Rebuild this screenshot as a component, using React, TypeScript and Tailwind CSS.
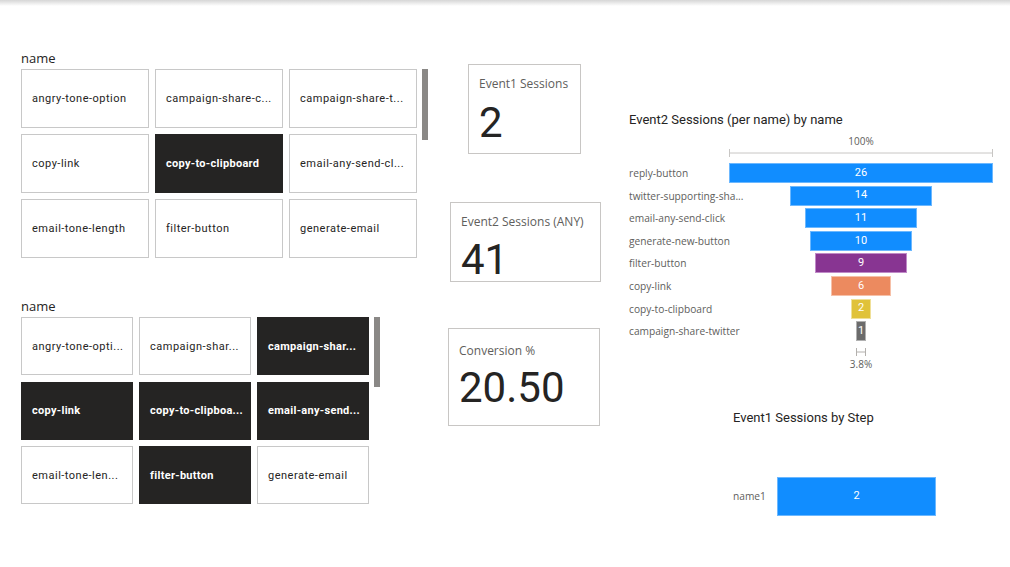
import React from "react";

// --- Data ------------------------------------------------------------------
const din = { fontFamily: "Roboto, 'Liberation Sans', sans-serif" };
const segoe = { fontFamily: "'Open Sans', 'Noto Sans', sans-serif" };

const slicerA = [
  { label: "angry-tone-option" },
  { label: "campaign-share-c..." },
  { label: "campaign-share-t..." },
  { label: "copy-link" },
  { label: "copy-to-clipboard", on: true },
  { label: "email-any-send-cl..." },
  { label: "email-tone-length" },
  { label: "filter-button" },
  { label: "generate-email" },
];

const slicerB = [
  { label: "angry-tone-opti..." },
  { label: "campaign-shar..." },
  { label: "campaign-shar...", on: true },
  { label: "copy-link", on: true },
  { label: "copy-to-clipboa...", on: true },
  { label: "email-any-send...", on: true },
  { label: "email-tone-len..." },
  { label: "filter-button", on: true },
  { label: "generate-email" },
];

const funnel = [
  { name: "reply-button", value: 26, color: "bg-[#118dff] border-[#6cb8ff]" },
  { name: "twitter-supporting-sha...", value: 14, color: "bg-[#118dff] border-[#6cb8ff]" },
  { name: "email-any-send-click", value: 11, color: "bg-[#118dff] border-[#6cb8ff]" },
  { name: "generate-new-button", value: 10, color: "bg-[#118dff] border-[#6cb8ff]" },
  { name: "filter-button", value: 9, color: "bg-[#883592] border-[#c08ac8]" },
  { name: "copy-link", value: 6, color: "bg-[#ec8a5f] border-[#f6c0a8]" },
  { name: "copy-to-clipboard", value: 2, color: "bg-[#e0c23a] border-[#f0e098]" },
  { name: "campaign-share-twitter", value: 1, color: "bg-[#6b6b6b] border-[#b0b0b0]" },
];

// --- Slicer ----------------------------------------------------------------
interface Tile {
  label: string;
  on?: boolean;
}

function Slicer({ tiles, wide }: { tiles: Tile[]; wide?: boolean }) {
  return (
    <div>
      <div className="h-[16px] text-[13px] leading-[16px] text-[#252423] mb-[3px]" style={segoe}>
        name
      </div>
      <div className="flex items-start gap-[5px]">
        <div
          className={
            wide
              ? "grid grid-cols-[128px_128px_128px] auto-rows-[59px] gap-x-[6px] gap-y-[6px]"
              : "grid grid-cols-[112px_112px_112px] auto-rows-[58px] gap-x-[6px] gap-y-[6.5px]"
          }
        >
          {tiles.map((t, i) => (
            <div
              key={i}
              className={
                t.on
                  ? "flex items-center pl-[10px] pt-[2px] bg-[#252423] border border-[#252423] text-white font-bold text-[11px] tracking-[0.3px] whitespace-nowrap overflow-hidden"
                  : "flex items-center pl-[10px] pt-[2px] bg-white border border-[#c8c8c8] text-[#252423] text-[11px] tracking-[0.5px] whitespace-nowrap overflow-hidden"
              }
              style={din}
            >
              {t.label}
            </div>
          ))}
        </div>
        <div className={wide ? "w-[6px] h-[71px] bg-[#8a8886]" : "w-[6px] h-[70px] bg-[#8a8886]"} />
      </div>
    </div>
  );
}

// --- Card ------------------------------------------------------------------
function Card({ title, value, className }: { title: string; value: string; className: string }) {
  return (
    <div className={"border border-[#c8c6c4] bg-white flex flex-col " + className}>
      <div className="text-[12px] leading-[16px] text-[#605e5c]" style={segoe}>
        {title}
      </div>
      <div className="text-[42px] leading-[42px] text-[#252423]" style={din}>
        {value}
      </div>
    </div>
  );
}

// --- Page ------------------------------------------------------------------
export default function App() {
  const max = funnel[0].value;
  return (
    <div className="w-[1010px] h-[567px] bg-white overflow-hidden">
      <div className="h-[6px] bg-linear-to-b from-[#d6d6d6] to-white" />
      <div className="flex items-start">
        {/* Slicers */}
        <div className="ml-[21px] pt-[44px] w-[407px]">
          <Slicer tiles={slicerA} wide />
          <div className="mt-[40px]">
            <Slicer tiles={slicerB} />
          </div>
        </div>

        {/* Cards */}
        <div className="ml-[20px] flex flex-col items-start">
          <Card title="Event1 Sessions" value="2" className="ml-[20px] mt-[58px] w-[113px] h-[90px] pl-[10px] pt-[11px] gap-[10px]" />
          <Card title="Event2 Sessions (ANY)" value="41" className="ml-[2px] mt-[48px] w-[151px] h-[80px] pl-[10px] pt-[11px] gap-[9px]" />
          <Card title="Conversion %" value="20.50" className="mt-[46px] w-[152px] h-[98px] pl-[10px] pt-[14px] gap-[8px]" />
        </div>

        {/* Charts */}
        <div className="ml-[28px] mt-[106px] w-[370px]">
          <div className="text-[13px] leading-[16px] text-[#252423]" style={din}>
            Event2 Sessions (per name) by name
          </div>
          <div className="ml-[100px] w-[264px]">
            <div className="mt-[7px] text-center text-[10px] leading-[12px] text-[#605e5c]" style={segoe}>
              100%
            </div>
            <svg width="264" height="10" className="mt-[1px] block">
              <line x1="0.5" y1="1" x2="0.5" y2="9" stroke="#c8c6c4" />
              <line x1="263.5" y1="1" x2="263.5" y2="9" stroke="#c8c6c4" />
              <line x1="0" y1="5" x2="264" y2="5" stroke="#c8c6c4" />
            </svg>
          </div>
          <div className="mt-[5px] flex flex-col">
            {funnel.map((f) => (
              <div key={f.name} className="flex items-start h-[22.6px]">
                <div className="w-[100px] text-[10.2px] leading-[20px] text-[#605e5c] whitespace-nowrap" style={segoe}>
                  {f.name}
                </div>
                <div className="w-[264px] flex justify-center">
                  <div
                    className={"h-[20px] border flex items-center justify-center text-white text-[11px] " + f.color}
                    style={{ ...din, width: (f.value / max) * 264 }}
                  >
                    {f.value}
                  </div>
                </div>
              </div>
            ))}
          </div>
          <div className="ml-[100px] w-[264px] flex flex-col items-center">
            <svg width="12" height="8" className="mt-[4px] block">
              <line x1="1.5" y1="0" x2="1.5" y2="8" stroke="#b3b0ad" />
              <line x1="10.5" y1="0" x2="10.5" y2="8" stroke="#b3b0ad" />
              <line x1="1" y1="4" x2="11" y2="4" stroke="#b3b0ad" />
            </svg>
            <div className="mt-[2px] text-[10px] leading-[12px] text-[#605e5c]" style={segoe}>
              3.8%
            </div>
          </div>

          <div className="ml-[104px] mt-[40px]">
            <div className="text-[13px] leading-[16px] text-[#252423]" style={din}>
              Event1 Sessions by Step
            </div>
            <div className="mt-[51px] flex items-center">
              <div className="w-[44px] text-[10.2px] text-[#605e5c]" style={segoe}>
                name1
              </div>
              <div className="w-[159px] h-[39px] bg-[#118dff] border border-[#6cb8ff] flex items-center justify-center text-white text-[11px]" style={din}>
                2
              </div>
            </div>
          </div>
        </div>
      </div>
    </div>
  );
}
